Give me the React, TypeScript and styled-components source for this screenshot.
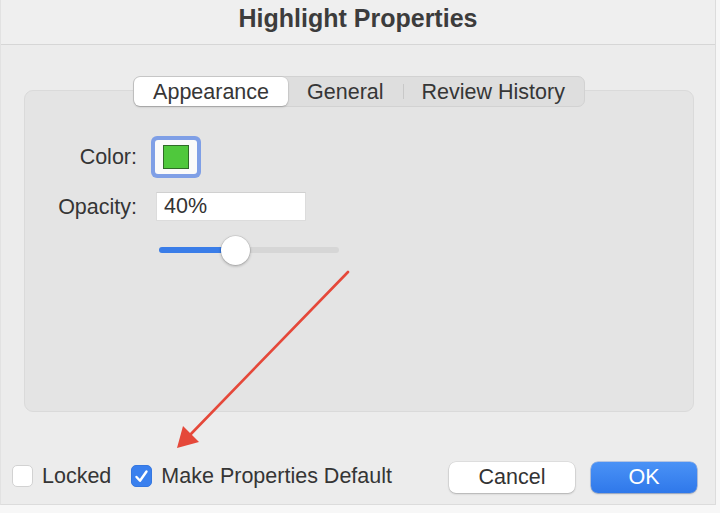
import React from "react";
import styled, { createGlobalStyle } from "styled-components";

const Global = createGlobalStyle`
  html, body { margin: 0; padding: 0; background: #f7f7f7; }
  body { font-family: "Liberation Sans", Arial, sans-serif; color: #333; }
  * { box-sizing: border-box; }
`;

const Window = styled.div`
  position: relative;
  width: 716px;
  height: 505px;
  background: #ececec;
  border-right: 1px solid #dcdcdc;
  border-bottom: 1px solid #dcdcdc;
  border-left: 1px solid #e2e2e2;
  display: flex;
  flex-direction: column;
`;

const TitleBar = styled.div`
  height: 45px;
  flex: none;
  display: flex;
  align-items: center;
  justify-content: center;
  background: #efefef;
  border-bottom: 1px solid #d6d6d6;
  font-weight: bold;
  font-size: 25px;
  color: #3c3c3c;
  padding-bottom: 7px;
`;

const Body = styled.div`
  flex: 1;
  display: flex;
  flex-direction: column;
  padding: 31px 21px 0 23px;
`;

const TabsRow = styled.div`
  display: flex;
  justify-content: center;
  margin-bottom: -17px;
  position: relative;
  z-index: 1;
`;

const Segmented = styled.div`
  display: flex;
  align-items: stretch;
  height: 31px;
  background: #dedede;
  border: 1px solid #d2d2d2;
  border-radius: 7px;
`;

const Tab = styled.div<{ $active?: boolean; $sep?: boolean }>`
  display: flex;
  align-items: center;
  justify-content: center;
  padding: 2px 19px 0;
  font-size: 21.5px;
  color: #363636;
  border-radius: 6px;
  position: relative;
  background: ${(p) => (p.$active ? "#fff" : "transparent")};
  box-shadow: ${(p) => (p.$active ? "0 1px 2px rgba(0,0,0,0.22), 0 0 0 0.5px rgba(0,0,0,0.08)" : "none")};
  ${(p) =>
    p.$sep
      ? `&::before { content: ""; position: absolute; left: 0; top: 7px; bottom: 7px; width: 1px; background: #c8c8c8; }`
      : ""}
`;

const GroupBox = styled.div`
  height: 322px;
  background: #e4e4e4;
  border: 1px solid #dadada;
  border-radius: 9px;
  padding-top: 45px;
  display: flex;
  flex-direction: column;
`;

const FormRow = styled.div<{ $h: number; $mt?: number }>`
  display: flex;
  align-items: center;
  height: ${(p) => p.$h}px;
  margin-top: ${(p) => p.$mt ?? 0}px;
`;

const Label = styled.div`
  width: 112px;
  text-align: right;
  font-size: 21.5px;
  color: #353535;
  padding-top: 1px;
`;

const ColorWell = styled.div`
  margin-left: 14px;
  width: 50px;
  height: 42px;
  border-radius: 6px;
  background: #7f9fe6;
  padding: 4px;
  display: flex;
`;

const WellInner = styled.div`
  flex: 1;
  background: #fafafa;
  border-radius: 3px;
  display: flex;
  align-items: center;
  justify-content: center;
`;

const Swatch = styled.div`
  width: 26px;
  height: 24px;
  background: #4fc83c;
  border: 1.5px solid #2f6b27;
`;

const TextField = styled.div`
  margin-left: 19px;
  width: 150px;
  height: 29px;
  background: #fff;
  border: 1px solid #dcdcdc;
  border-top-color: #d0d0d0;
  display: flex;
  align-items: center;
  padding-left: 7px;
  font-size: 21.5px;
  color: #333;
`;

const SliderWrap = styled.div`
  margin-left: 22px;
  width: 180px;
  height: 30px;
  position: relative;
  display: flex;
  align-items: center;
`;

const Track = styled.div`
  width: 100%;
  height: 6px;
  border-radius: 3px;
  background: #d6d6d6;
  overflow: hidden;
`;

const Fill = styled.div`
  height: 100%;
  background: #3a7de8;
`;

const Knob = styled.div`
  position: absolute;
  top: 1px;
  width: 29px;
  height: 29px;
  border-radius: 50%;
  background: #fff;
  box-shadow: 0 1px 3px rgba(0, 0, 0, 0.3), 0 0 0 0.5px rgba(0, 0, 0, 0.12);
`;

const Footer = styled.div`
  display: flex;
  align-items: center;
  margin-top: 50px;
  margin-left: -12px;
  margin-right: -3px;
  height: 31px;
`;

const CheckBox = styled.div<{ $checked?: boolean }>`
  width: 21px;
  height: 22px;
  border-radius: 5px;
  background: ${(p) => (p.$checked ? "#3a80ee" : "#fff")};
  border: 1px solid ${(p) => (p.$checked ? "#3577e0" : "#d2d2d2")};
  display: flex;
  align-items: center;
  justify-content: center;
  flex: none;
  margin-top: -3px;
`;

const CheckLabel = styled.div`
  font-size: 21.5px;
  color: #353535;
  margin-left: 9px;
  margin-right: 20px;
  margin-top: -3px;
`;

const Spacer = styled.div`
  flex: 1;
`;

const Button = styled.div<{ $primary?: boolean; $w: number }>`
  width: ${(p) => p.$w}px;
  height: 31px;
  border-radius: 7px;
  display: flex;
  align-items: center;
  justify-content: center;
  font-size: 21.5px;
  color: ${(p) => (p.$primary ? "#fff" : "#333")};
  background: ${(p) => (p.$primary ? "linear-gradient(#4a92f6, #2f78ea)" : "#fff")};
  box-shadow: ${(p) =>
    p.$primary
      ? "0 1px 2px rgba(0,0,0,0.2), 0 0 0 0.5px rgba(30,90,200,0.5)"
      : "0 1px 2px rgba(0,0,0,0.22), 0 0 0 0.5px rgba(0,0,0,0.1)"};
  margin-left: ${(p) => (p.$primary ? 16 : 0)}px;
`;

const ArrowOverlay = styled.svg`
  position: absolute;
  left: 0;
  top: 0;
  pointer-events: none;
`;

export default function App() {
  const pct = 0.42;
  return (
    <>
      <Global />
      <Window>
        <TitleBar>Highlight Properties</TitleBar>
        <Body>
          <TabsRow>
            <Segmented>
              <Tab $active>Appearance</Tab>
              <Tab>General</Tab>
              <Tab $sep>Review History</Tab>
            </Segmented>
          </TabsRow>
          <GroupBox>
            <FormRow $h={42}>
              <Label>Color:</Label>
              <ColorWell>
                <WellInner>
                  <Swatch />
                </WellInner>
              </ColorWell>
            </FormRow>
            <FormRow $h={29} $mt={14}>
              <Label>Opacity:</Label>
              <TextField>40%</TextField>
            </FormRow>
            <FormRow $h={30} $mt={14}>
              <Label />
              <SliderWrap>
                <Track>
                  <Fill style={{ width: `${pct * 100}%` }} />
                </Track>
                <Knob style={{ left: `${pct * 180 - 14}px` }} />
              </SliderWrap>
            </FormRow>
          </GroupBox>
          <Footer>
            <CheckBox />
            <CheckLabel>Locked</CheckLabel>
            <CheckBox $checked>
              <svg width="17" height="17" viewBox="0 0 17 17">
                <path d="M3.5 9 L7 12.8 L13.5 3.5" fill="none" stroke="#fff" strokeWidth="2.4" strokeLinecap="round" strokeLinejoin="round" />
              </svg>
            </CheckBox>
            <CheckLabel>Make Properties Default</CheckLabel>
            <Spacer />
            <Button $w={126}>Cancel</Button>
            <Button $primary $w={106}>OK</Button>
          </Footer>
        </Body>
        <ArrowOverlay width="716" height="505" viewBox="0 0 716 505">
          <line x1="347" y1="272" x2="188" y2="436" stroke="#e5483a" strokeWidth="2.6" strokeLinecap="round" />
          <polygon points="176,448 182,426 198,442" fill="#e5483a" />
        </ArrowOverlay>
      </Window>
    </>
  );
}
